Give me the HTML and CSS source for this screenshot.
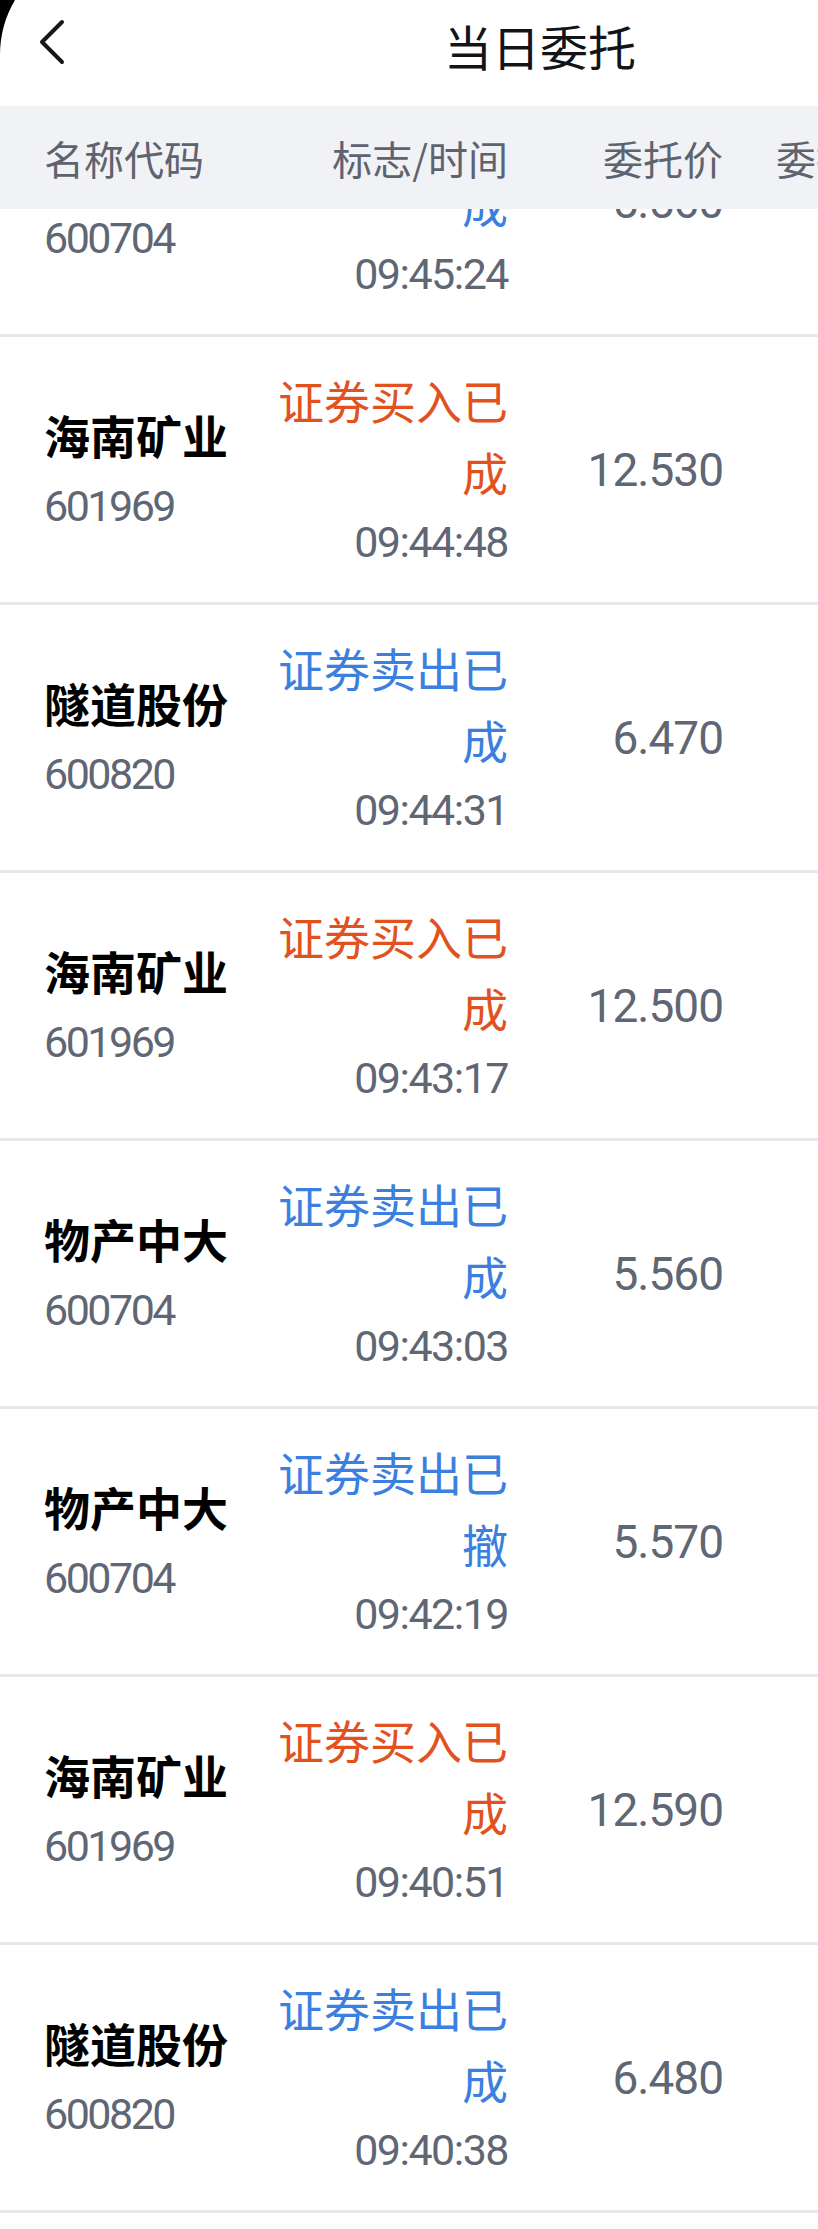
FILE: index.html
```html
<!DOCTYPE html>
<html lang="zh-CN">
<head>
  <meta charset="UTF-8">
  <meta name="viewport" content="width=device-width, initial-scale=1.0">
  <title>当日委托</title>
  <link rel="stylesheet" href="styles.css">
</head>
<body>
  <div class="screen">
    <svg class="corner" width="16" height="56" viewBox="0 0 16 56" aria-hidden="true">
      <path d="M0 0 H15 A108 108 0 0 0 0 55 Z" fill="#000" />
    </svg>

    <header class="navbar">
      <button class="back" type="button" aria-label="返回">
        <svg width="28" height="46" viewBox="0 0 28 46">
          <path d="M24 3 L4 23 L24 43" fill="none" stroke="#16181c" stroke-width="4" stroke-linecap="round" stroke-linejoin="round" />
        </svg>
      </button>
      <h1 class="title">当日委托</h1>
    </header>

    <div class="table-head">
      <span>名称代码</span>
      <span class="right">标志/时间</span>
      <span class="right">委托价</span>
      <span class="right">委托数量</span>
    </div>

    <div class="list-viewport">
      <ul class="order-list">
        <li class="order-row">
          <div class="stock"><div class="stock-name">物产中大</div><div class="stock-code">600704</div></div>
          <div class="flag"><div class="flag-text sell">证券卖出已成</div><div class="time">09:45:24</div></div>
          <div class="price">5.560</div>
          <div class="qty">3000</div>
        </li>
        <li class="order-row">
          <div class="stock"><div class="stock-name">海南矿业</div><div class="stock-code">601969</div></div>
          <div class="flag"><div class="flag-text buy">证券买入已成</div><div class="time">09:44:48</div></div>
          <div class="price">12.530</div>
          <div class="qty">1000</div>
        </li>
        <li class="order-row">
          <div class="stock"><div class="stock-name">隧道股份</div><div class="stock-code">600820</div></div>
          <div class="flag"><div class="flag-text sell">证券卖出已成</div><div class="time">09:44:31</div></div>
          <div class="price">6.470</div>
          <div class="qty">2000</div>
        </li>
        <li class="order-row">
          <div class="stock"><div class="stock-name">海南矿业</div><div class="stock-code">601969</div></div>
          <div class="flag"><div class="flag-text buy">证券买入已成</div><div class="time">09:43:17</div></div>
          <div class="price">12.500</div>
          <div class="qty">1000</div>
        </li>
        <li class="order-row">
          <div class="stock"><div class="stock-name">物产中大</div><div class="stock-code">600704</div></div>
          <div class="flag"><div class="flag-text sell">证券卖出已成</div><div class="time">09:43:03</div></div>
          <div class="price">5.560</div>
          <div class="qty">3000</div>
        </li>
        <li class="order-row">
          <div class="stock"><div class="stock-name">物产中大</div><div class="stock-code">600704</div></div>
          <div class="flag"><div class="flag-text sell">证券卖出已撤</div><div class="time">09:42:19</div></div>
          <div class="price">5.570</div>
          <div class="qty">3000</div>
        </li>
        <li class="order-row">
          <div class="stock"><div class="stock-name">海南矿业</div><div class="stock-code">601969</div></div>
          <div class="flag"><div class="flag-text buy">证券买入已成</div><div class="time">09:40:51</div></div>
          <div class="price">12.590</div>
          <div class="qty">1000</div>
        </li>
        <li class="order-row">
          <div class="stock"><div class="stock-name">隧道股份</div><div class="stock-code">600820</div></div>
          <div class="flag"><div class="flag-text sell">证券卖出已成</div><div class="time">09:40:38</div></div>
          <div class="price">6.480</div>
          <div class="qty">2000</div>
        </li>
        <li class="order-row">
          <div class="stock"><div class="stock-name">海南矿业</div><div class="stock-code">601969</div></div>
          <div class="flag"><div class="flag-text buy">证券买入已成</div><div class="time">09:38:12</div></div>
          <div class="price">12.610</div>
          <div class="qty">1000</div>
        </li>
      </ul>
    </div>
  </div>
</body>
</html>
```

FILE: styles.css
```css
* {
  margin: 0;
  padding: 0;
  box-sizing: border-box;
}

body {
  background-color: #fff;
  overflow: hidden;
  font-family: "Noto Sans CJK SC", "Noto Sans", sans-serif;
}

.screen {
  position: relative;
  width: 1080px;
  height: 2229px;
  display: flex;
  flex-direction: column;
  overflow: hidden;
  background-color: #fff;
}

/* rounded screen corner */
.corner {
  position: absolute;
  top: 0;
  left: 0;
  z-index: 5;
}

.navbar {
  height: 106px;
  padding-bottom: 17px;
  display: grid;
  grid-template-columns: 1fr auto 1fr;
  align-items: center;
  background-color: #fff;
  flex-shrink: 0;
}

.back {
  justify-self: start;
  display: flex;
  margin-left: 38px;
  margin-bottom: 5px;
  background: none;
  border: none;
  cursor: pointer;
}

.title {
  font-size: 48px;
  font-weight: 400;
  line-height: 1;
  color: #121418;
}

.table-head,
.order-row {
  display: grid;
  grid-template-columns: 220px 244px 215px 213px;
  padding-left: 44px;
  align-items: center;
}

.table-head {
  height: 103px;
  flex-shrink: 0;
  background-color: #f1f2f6;
  font-size: 40px;
  color: #5d636f;
  white-space: nowrap;
}

.right {
  text-align: right;
}

.list-viewport {
  flex: 1;
  overflow: hidden;
}

/* list is scrolled: first row sits partly under the header */
.order-list {
  list-style: none;
  margin-top: -140px;
}

.order-row {
  height: 268px;
  border-bottom: 3px solid #e7e8eb;
}

.stock-name {
  font-size: 46px;
  font-weight: 700;
  line-height: 72px;
  color: #000;
  white-space: nowrap;
}

.stock-code,
.time,
.price,
.qty {
  font-family: Roboto, "Noto Sans CJK SC", sans-serif;
  color: #5f6674;
}

.stock-code {
  font-size: 43px;
  line-height: 72px;
  letter-spacing: -2.5px;
}

.flag {
  text-align: right;
}

.flag-text {
  font-size: 46px;
  line-height: 72px;
}

.flag-text.buy {
  color: #e1521f;
}

.flag-text.sell {
  color: #3b7fdf;
}

.time {
  font-size: 43px;
  line-height: 70px;
  letter-spacing: -1.5px;
}

.price,
.qty {
  font-size: 46px;
  text-align: right;
  letter-spacing: -1px;
}
```
